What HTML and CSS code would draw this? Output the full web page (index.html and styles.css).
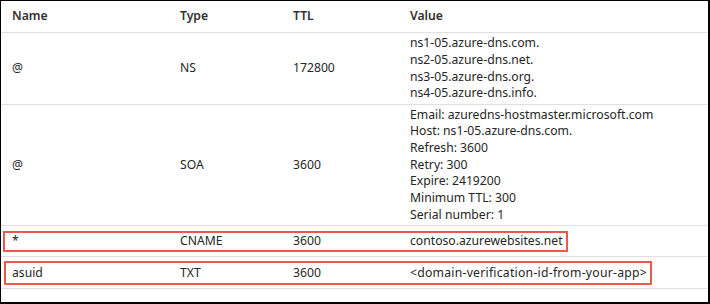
FILE: index.html
```html
<!DOCTYPE html>
<html>
<head>
<meta charset="utf-8">
<link rel="stylesheet" href="styles.css">
</head>
<body>
<div class="frame">
  <div class="row head">
    <div>Name</div><div>Type</div><div>TTL</div><div>Value</div>
  </div>
  <div class="row ns">
    <div>@</div><div>NS</div><div>172800</div>
    <div class="lines">ns1-05.azure-dns.com.<br>ns2-05.azure-dns.net.<br>ns3-05.azure-dns.org.<br>ns4-05.azure-dns.info.</div>
  </div>
  <div class="row soa">
    <div>@</div><div>SOA</div><div>3600</div>
    <div class="lines">Email: azuredns-hostmaster.microsoft.com<br>Host: ns1-05.azure-dns.com.<br>Refresh: 3600<br>Retry: 300<br>Expire: 2419200<br>Minimum TTL: 300<br>Serial number: 1</div>
  </div>
  <div class="hlrow cname">
    <div class="hl">
      <div>*</div><div>CNAME</div><div>3600</div><div>contoso.azurewebsites.net</div>
    </div>
  </div>
  <div class="hlrow txt">
    <div class="hl">
      <div>asuid</div><div>TXT</div><div>3600</div><div class="wide">&lt;domain-verification-id-from-your-app&gt;</div>
    </div>
  </div>
</div>
</body>
</html>
```

FILE: styles.css
```css
html, body {
  margin: 0;
  padding: 0;
  background: #fff;
}
.frame {
  width: 710px;
  height: 304px;
  box-sizing: border-box;
  border: 1px solid #000;
  border-bottom-width: 2px;
  border-right-width: 2px;
  font-family: "Noto Sans", "Open Sans", sans-serif;
  font-size: 12.2px;
  line-height: 16.67px;
  color: #262626;
}
.row {
  display: grid;
  grid-template-columns: 168px 113px 117px 1fr;
  align-items: center;
  padding-left: 11px;
  border-bottom: 1px solid #e0e0e0;
}
.head {
  height: 31px;
  font-weight: 600;
  color: #323130;
}
.ns { height: 71px; }
.soa { height: 120px; }
.hlrow {
  display: flex;
  align-items: flex-start;
  border-bottom: 1px solid #e0e0e0;
  height: 31px;
  box-sizing: border-box;
}
.hl {
  display: inline-grid;
  grid-template-columns: 168px 113px 117px auto;
  align-items: center;
  border: 2.5px solid #e95a4f;
  padding-right: 3px;
}
.wide { letter-spacing: 0.25px; }
.cname { padding: 5px 0 0 2px; }
.cname .hl { padding-left: 7px; height: 17px; }
.txt { padding: 4px 0 0 3px; height: 32px; }
.txt .hl { padding-left: 6px; height: 20px; }
```
